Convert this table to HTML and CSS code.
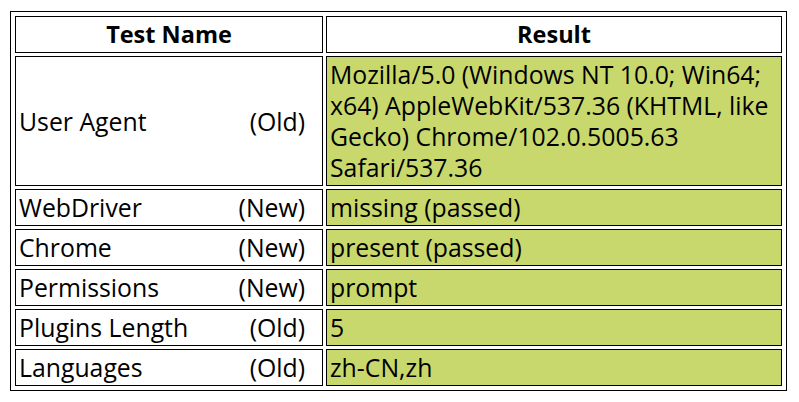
FILE: index.html
```html
<!DOCTYPE html>
<html>
<head>
<meta charset="utf-8">
<link rel="stylesheet" href="styles.css">
</head>
<body>
<table class="results">
  <colgroup><col class="c1"><col class="c2"></colgroup>
  <thead>
    <tr><th>Test Name</th><th>Result</th></tr>
  </thead>
  <tbody>
    <tr><td class="name"><span class="label"><span>User Agent</span><span class="age">(Old)</span></span></td><td class="passed">Mozilla/5.0 (Windows NT 10.0; Win64; x64) AppleWebKit/537.36 (KHTML, like Gecko) Chrome/102.0.5005.63 Safari/537.36</td></tr>
    <tr><td class="name"><span class="label"><span>WebDriver</span><span class="age">(New)</span></span></td><td class="passed">missing (passed)</td></tr>
    <tr><td class="name"><span class="label"><span>Chrome</span><span class="age">(New)</span></span></td><td class="passed">present (passed)</td></tr>
    <tr><td class="name"><span class="label"><span>Permissions</span><span class="age">(New)</span></span></td><td class="passed">prompt</td></tr>
    <tr><td class="name"><span class="label"><span>Plugins Length</span><span class="age">(Old)</span></span></td><td class="passed">5</td></tr>
    <tr><td class="name"><span class="label"><span>Languages</span><span class="age">(Old)</span></span></td><td class="passed">zh-CN,zh</td></tr>
  </tbody>
</table>
</body>
</html>
```

FILE: styles.css
```css
html, body {
  margin: 0;
  background: #fff;
}
body {
  padding: 11px 0 0 10px;
  font-family: "Open Sans", "Noto Sans", sans-serif;
  font-size: 24.8px;
  color: #000;
}
.results {
  border: 1px solid #000;
  border-collapse: separate;
  border-spacing: 3px;
  padding: 1px;
  table-layout: fixed;
  width: 777px;
  font-size: 24.8px;
}
.c1 { width: 308px; }
.c2 { width: 456px; }
.results th,
.results td {
  border: 1px solid #000;
  padding: 2px 3px;
  line-height: 31px;
  box-sizing: border-box;
  vertical-align: middle;
}
.results th {
  font-weight: bold;
  font-size: 23.5px;
  text-align: center;
}
.results td {
  text-align: left;
}
.name {
  padding-right: 17px !important;
}
.label {
  display: flex;
  justify-content: space-between;
}
.passed {
  background: #c8d86d;
}
```
